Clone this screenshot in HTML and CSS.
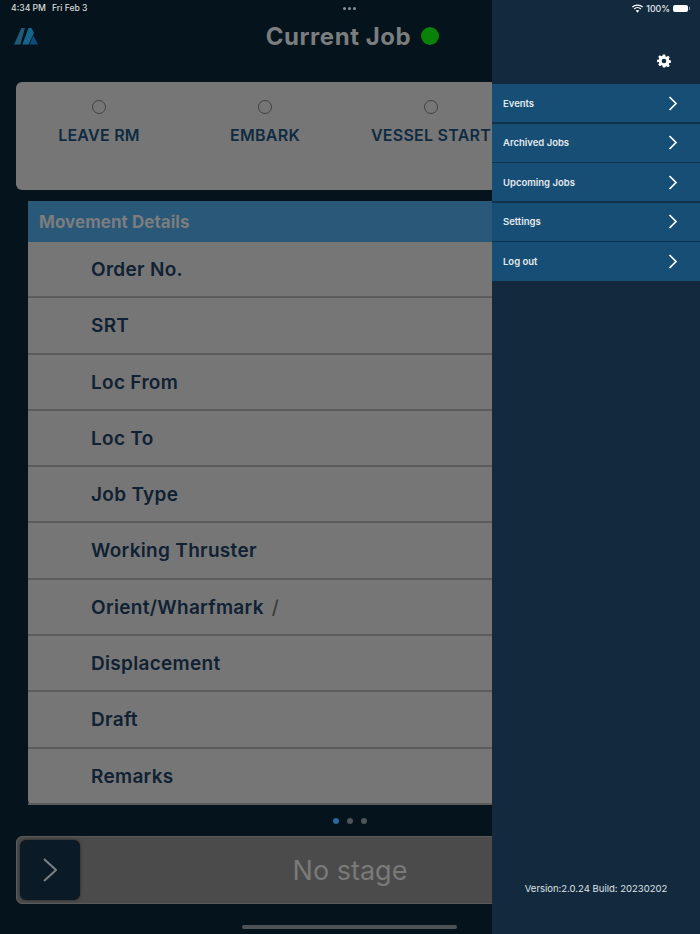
FILE: index.html
```html
<html>
    <head>
        <link rel="stylesheet" href="styles.css">
        <title>Current Job</title>
    </head>

    <body>
        <div class="screen">
            <div class="main">
                <div class="statusbar">
                    <span class="clock">4:34 PM</span>
                    <span class="date">Fri Feb 3</span>
                    <span class="multitask"><i></i><i></i><i></i></span>
                </div>

                <div class="topbar">
                    <svg class="logo" width="24" height="17" viewBox="0 0 24 17">
                        <polygon points="0,16.500 7.300,0 11,0 6.300,16.500" fill="#1f5a78"></polygon>
                        <polygon points="8.400,16.500 14.500,0 17.500,0 20,5 14.500,16.500" fill="#15648a"></polygon>
                        <polygon points="15.500,16.500 19.500,7.500 24,16.500" fill="#0e4a7c"></polygon>
                    </svg>
                    <span class="title">Current Job</span>
                    <span class="online"></span>
                </div>

                <div class="stages">
                    <div class="stage"><span class="radio"></span><span class="stage-name">LEAVE RM</span></div>
                    <div class="stage"><span class="radio"></span><span class="stage-name">EMBARK</span></div>
                    <div class="stage"><span class="radio"></span><span class="stage-name">VESSEL START</span></div>
                </div>

                <div class="details">
                    <div class="details-head">Movement Details</div>
                    <div class="row">Order No.</div>
                    <div class="row">SRT</div>
                    <div class="row">Loc From</div>
                    <div class="row">Loc To</div>
                    <div class="row">Job Type</div>
                    <div class="row">Working Thruster</div>
                    <div class="row">Orient/Wharfmark<span class="slash">/</span></div>
                    <div class="row">Displacement</div>
                    <div class="row">Draft</div>
                    <div class="row">Remarks</div>
                </div>

                <div class="dots">
                    <span class="dot active"></span>
                    <span class="dot"></span>
                    <span class="dot"></span>
                </div>

                <div class="slider">
                    <div class="slider-btn">
                        <svg width="14" height="24" viewBox="0 0 14 24">
                            <polyline points="1,1 13,12 1,23" fill="none" stroke="#7a8084" stroke-width="2"></polyline>
                        </svg>
                    </div>
                    <div class="slider-text">No stage</div>
                </div>

                <div class="home-bar"></div>
            </div>

            <div class="drawer">
                <div class="drawer-status">
                    <svg width="11" height="9" viewBox="0 0 12 9">
                        <path d="M0.400 3 A8 8 0 0 1 11.600 3" fill="none" stroke="#fff" stroke-width="1.400"></path>
                        <path d="M2.400 5 A5.200 5.200 0 0 1 9.600 5" fill="none" stroke="#fff" stroke-width="1.400"></path>
                        <path d="M4 6.800 Q6 5.400 8 6.800 L6 9 Z" fill="#fff"></path>
                    </svg>
                    <span class="battery-pct">100%</span>
                    <span class="battery"><i></i></span>
                </div>
                <div class="drawer-gear">
                    <svg width="14" height="14" viewBox="0 0 24 24">
                        <path fill="#fff" fill-rule="evenodd" d="M10 1h4l.6 3.100 1.900.8 2.600-1.800 2.800 2.800-1.800 2.600.8 1.900 3.100.6v4l-3.100.6-.8 1.900 1.800 2.600-2.800 2.800-2.600-1.800-1.900.8L14 23h-4l-.6-3.100-1.900-.8-2.600 1.800-2.800-2.800 1.800-2.600-.8-1.900L0 14v-4l3.100-.6.8-1.900L2.100 4.900 4.900 2.100l2.600 1.800 1.900-.8zM12 8a4 4 0 1 0 0 8 4 4 0 0 0 0-8z"></path>
                    </svg>
                </div>
                <div class="menu">
                    <div class="menu-item"><span>Events</span><svg width="10" height="15" viewBox="0 0 10 15"><polyline points="1.500,1 8,7.500 1.500,14" fill="none" stroke="#fff" stroke-width="1.700"></polyline></svg></div>
                    <div class="menu-item"><span>Archived Jobs</span><svg width="10" height="15" viewBox="0 0 10 15"><polyline points="1.500,1 8,7.500 1.500,14" fill="none" stroke="#fff" stroke-width="1.700"></polyline></svg></div>
                    <div class="menu-item"><span>Upcoming Jobs</span><svg width="10" height="15" viewBox="0 0 10 15"><polyline points="1.500,1 8,7.500 1.500,14" fill="none" stroke="#fff" stroke-width="1.700"></polyline></svg></div>
                    <div class="menu-item"><span>Settings</span><svg width="10" height="15" viewBox="0 0 10 15"><polyline points="1.500,1 8,7.500 1.500,14" fill="none" stroke="#fff" stroke-width="1.700"></polyline></svg></div>
                    <div class="menu-item"><span>Log out</span><svg width="10" height="15" viewBox="0 0 10 15"><polyline points="1.500,1 8,7.500 1.500,14" fill="none" stroke="#fff" stroke-width="1.700"></polyline></svg></div>
                </div>
                <div class="version">Version:2.0.24 Build: 20230202</div>
            </div>
        </div>
    </body>
</html>
```

FILE: styles.css
```css
body {
    margin: 0px;
    background: #05131c;
    font-family: Inter, "Liberation Sans", sans-serif;
}

.screen {
    position: relative;
    width: 700px;
    height: 934px;
    overflow: hidden;
}

.main {
    width: 700px;
    height: 934px;
    background: #05131c;
    overflow: hidden;
}

.statusbar {
    position: relative;
    height: 16px;
    padding-bottom: 3px;
    padding-left: 11px;
    display: flex;
    align-items: center;
    color: #d8dbdd;
    font-size: 8.600px;
    font-weight: 500;
}

.date {
    margin-left: 6px;
}

.multitask {
    position: absolute;
    left: 343px;
    top: 7px;
    display: flex;
    gap: 2px;
}

.multitask i {
    width: 3px;
    height: 3px;
    border-radius: 50%;
    background: #8b9095;
}

.topbar {
    position: relative;
    height: 34px;
    display: flex;
    align-items: center;
    justify-content: center;
    padding-left: 5px;
    box-sizing: border-box;
}

.logo {
    position: absolute;
    left: 14px;
    top: 9px;
}

.title {
    color: #7b7d7f;
    font-size: 24px;
    font-weight: 700;
    letter-spacing: 0.55px;
}

.online {
    width: 18px;
    height: 18px;
    margin-left: 10px;
    border-radius: 50%;
    background: #0a8207;
}

.stages {
    display: flex;
    width: 600px;
    height: 108px;
    margin: 29px 0 0 16px;
    background: #767676;
    border-radius: 6px;
}

.stage {
    width: 166px;
    display: flex;
    flex-direction: column;
    align-items: center;
    padding-top: 18px;
    box-sizing: border-box;
}

.radio {
    width: 12px;
    height: 12px;
    border: 1px solid #3f4245;
    border-radius: 50%;
}

.stage-name {
    margin-top: 11px;
    color: #0f2b42;
    font-size: 16px;
    font-weight: 600;
    letter-spacing: 0.25px;
    white-space: nowrap;
}

.details {
    width: 600px;
    margin: 11px 0 0 28px;
    background: #767676;
    border-radius: 0 0 0 5px;
}

.details-head {
    height: 41px;
    line-height: 42px;
    padding-left: 11px;
    background: #2a5878;
    color: #7b7d7f;
    font-size: 17px;
    font-weight: 700;
    letter-spacing: 0.05px;
}

.row {
    height: 54.300px;
    line-height: 56px;
    padding-left: 63px;
    border-bottom: 2px solid #5c5c5c;
    color: #0f2133;
    font-size: 19px;
    font-weight: 600;
    letter-spacing: 0.3px;
}

.slash {
    margin-left: 8px;
    color: #3c3c3c;
    font-weight: 500;
}

.dots {
    display: flex;
    gap: 8.300px;
    margin: 13px 0 0 332.700px;
}

.dot {
    width: 6px;
    height: 6px;
    border-radius: 50%;
    background: #50545a;
}

.dot.active {
    background: #2a6a9a;
}

.slider {
    display: flex;
    width: 668px;
    height: 68px;
    margin: 12px 0 0 16px;
    padding: 3px;
    box-sizing: border-box;
    background: #4b4b4b;
    border: 1px solid #5a5a5a;
    border-radius: 6px;
}

.slider-btn {
    width: 60px;
    height: 60px;
    display: flex;
    align-items: center;
    justify-content: center;
    background: #0a1a26;
    border-radius: 6px;
    box-shadow: 0 0 3px #222;
}

.slider-text {
    width: 540px;
    height: 60px;
    line-height: 62px;
    text-align: center;
    color: #7a7a7a;
    font-size: 27px;
    font-weight: 400;
}

.home-bar {
    width: 215px;
    height: 4px;
    margin: 21px 0 0 242px;
    background: #4f5254;
    border-radius: 2px;
}

/* drawer sits over the page */
.drawer {
    position: absolute;
    top: 0;
    right: 0;
    width: 208px;
    height: 934px;
    display: flex;
    flex-direction: column;
    background: #13293d;
}

.drawer-status {
    height: 17px;
    padding-right: 10px;
    display: flex;
    align-items: center;
    justify-content: flex-end;
    color: #e8eaec;
    font-size: 8.800px;
    font-weight: 500;
}

.battery-pct {
    margin-left: 3px;
}

.battery {
    position: relative;
    width: 15px;
    height: 7px;
    margin-left: 3px;
    margin-right: 2px;
    background: #fff;
    border-radius: 2px;
}

.battery i {
    position: absolute;
    left: 16px;
    top: 2px;
    width: 1px;
    height: 3px;
    background: #8a96a0;
}

.drawer-gear {
    height: 67px;
    display: flex;
    align-items: center;
    justify-content: flex-end;
    padding-right: 29px;
    padding-top: 20px;
    box-sizing: border-box;
}

.menu {
    background: #10324c;
}

.menu-item {
    height: 38px;
    margin-bottom: 1.600px;
    padding: 0 22px 0 11px;
    display: flex;
    align-items: center;
    justify-content: space-between;
    background: #174e75;
    color: #e6eaee;
    font-size: 9.500px;
    font-weight: 600;
}

.menu-item:last-child {
    margin-bottom: 0;
    height: 38.500px;
}

.version {
    margin-top: auto;
    margin-bottom: 40px;
    text-align: center;
    color: #dfe3e6;
    font-size: 9.500px;
    font-weight: 400;
}
```
